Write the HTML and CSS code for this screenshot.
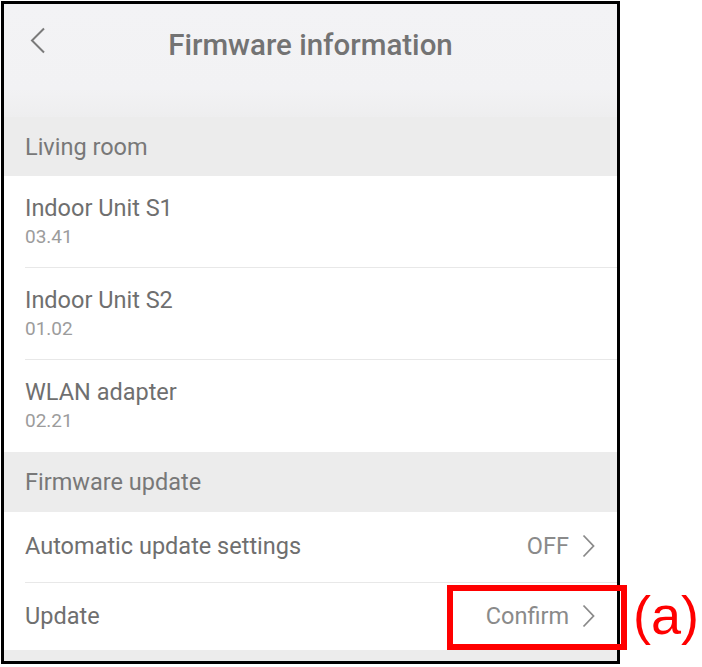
FILE: index.html
```html
<!DOCTYPE html>
<html lang="en">
<head>
    <meta charset="UTF-8">
    <meta name="viewport" content="width=device-width, initial-scale=1.0">
    <title>Firmware information</title>
    <link rel="stylesheet" href="styles.css">
</head>
<body>

    <div class="stage">
        <div class="phone">

            <!-- Top bar -->
            <div class="topbar">
                <div class="back">
                    <svg width="16" height="27" viewBox="0 0 16 27">
                        <polyline points="14,1.5 2,13.5 14,25.5" fill="none" stroke="#7a7a7a" stroke-width="2"/>
                    </svg>
                </div>
                <h1 class="title">Firmware information</h1>
                <div></div>
            </div>

            <!-- Living room -->
            <div class="section">Living room</div>
            <div class="list">
                <div class="row unit">
                    <div class="name">Indoor Unit S1</div>
                    <div class="version">03.41</div>
                </div>
                <div class="row unit">
                    <div class="name">Indoor Unit S2</div>
                    <div class="version">01.02</div>
                </div>
                <div class="row unit last">
                    <div class="name">WLAN adapter</div>
                    <div class="version">02.21</div>
                </div>
            </div>

            <!-- Firmware update -->
            <div class="section">Firmware update</div>
            <div class="list">
                <div class="row setting">
                    <div class="name">Automatic update settings</div>
                    <div class="value">OFF
                        <svg class="arrow" width="13" height="24" viewBox="0 0 13 24">
                            <polyline points="1.5,1.5 11.5,12 1.5,22.5" fill="none" stroke="#8a8a8a" stroke-width="1.8"/>
                        </svg>
                    </div>
                </div>
                <div class="row setting update last">
                    <div class="name">Update</div>
                    <div class="value">Confirm
                        <svg class="arrow" width="13" height="24" viewBox="0 0 13 24">
                            <polyline points="1.5,1.5 11.5,12 1.5,22.5" fill="none" stroke="#8a8a8a" stroke-width="1.8"/>
                        </svg>
                    </div>
                </div>
            </div>
            <div class="bottom"></div>
        </div>

        <!-- annotation -->
        <div class="mark"></div>
        <div class="mark-label">(a)</div>
    </div>

</body>
</html>
```

FILE: styles.css
```css
body {
    margin: 0;
    background: #fff;
    font-family: Roboto, "Noto Sans", sans-serif;
}
.stage {
    position: relative;
    width: 702px;
    height: 667px;
    padding: 1px;
    box-sizing: border-box;
}
.phone {
    width: 613px;
    height: 657px;
    border: 3px solid #000;
    background: #fff;
    display: flex;
    flex-direction: column;
    overflow: hidden;
}
.topbar {
    height: 113px;
    flex-shrink: 0;
    display: grid;
    grid-template-columns: 1fr auto 1fr;
    align-items: start;
    background: linear-gradient(#f3f3f5 0%, #f2f2f4 75%, #eeeeef 100%);
}
.back {
    padding: 23px 0 0 26px;
}
.title {
    margin: 0;
    padding-top: 24px;
    font-size: 29.5px;
    line-height: 34px;
    font-weight: 500;
    color: #737373;
}
.section {
    height: 59px;
    flex-shrink: 0;
    display: flex;
    align-items: center;
    padding-left: 21px;
    background: #ececec;
    font-size: 23.5px;
    color: #787878;
}
.section + .list + .section {
    height: 60px;
}
.list {
    background: #fff;
}
.row {
    margin-left: 21px;
    padding-right: 22px;
    border-bottom: 1px solid #e8e8e8;
    display: flex;
}
.row.last {
    border-bottom: none;
}
.unit {
    height: 92px;
    flex-direction: column;
    justify-content: center;
    box-sizing: border-box;
}
.name {
    font-size: 23.5px;
    line-height: 30px;
    color: #6f6f6f;
}
.version {
    font-size: 19px;
    line-height: 28px;
    color: #9c9c9c;
}
.setting {
    height: 71px;
    align-items: center;
    justify-content: space-between;
    padding-bottom: 2px;
    box-sizing: border-box;
}
.setting.update {
    height: 67px;
}
.value {
    display: flex;
    align-items: center;
    gap: 13px;
    font-size: 23.5px;
    color: #8a8a8a;
}
.bottom {
    flex: 1;
    background: #ececec;
}
.mark {
    position: absolute;
    left: 447px;
    top: 585px;
    width: 168px;
    height: 53px;
    border: 6px solid #ff0000;
}
.mark-label {
    position: absolute;
    left: 633px;
    top: 585px;
    font-family: "Liberation Sans", Arial, sans-serif;
    font-size: 54px;
    line-height: 60px;
    color: #ff0000;
}
```
